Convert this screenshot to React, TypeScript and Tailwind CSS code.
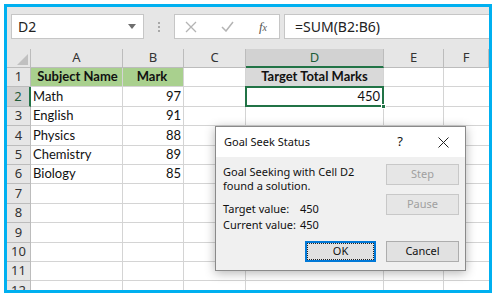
import React from "react";

const cols = ["A", "B", "C", "D", "E", "F"];

const rows: { n: number; a?: string; b?: string; d?: string }[] = [
  { n: 1, a: "Subject Name", b: "Mark", d: "Target Total Marks" },
  { n: 2, a: "Math", b: "97", d: "450" },
  { n: 3, a: "English", b: "91" },
  { n: 4, a: "Physics", b: "88" },
  { n: 5, a: "Chemistry", b: "89" },
  { n: 6, a: "Biology", b: "85" },
  { n: 7 },
  { n: 8 },
  { n: 9 },
  { n: 10 },
  { n: 11 },
  { n: 12 },
];

const cellFont = { fontFamily: "Lato, 'Liberation Sans', sans-serif" };
const uiFont = { fontFamily: "'Noto Sans', 'Liberation Sans', sans-serif" };

const FormulaBar = () => (
  <div className="h-[42px] shrink-0 bg-[#e6e6e6] flex items-start pt-[7px] pl-[4px]" style={uiFont}>
    <div className="w-[133px] h-[25px] bg-white border border-[#c6c6c6] flex items-center justify-between pl-[6px] pr-[7px] text-[14px] text-[#222]">
      <span>D2</span>
      <span className="w-0 h-0 border-l-[4px] border-r-[4px] border-t-[5px] border-l-transparent border-r-transparent border-t-[#6e6e6e]" />
    </div>
    <div className="w-[30px] h-[25px] flex flex-col items-center justify-center gap-[2px]">
      <span className="w-[2px] h-[2px] bg-[#a8a8a8]" />
      <span className="w-[2px] h-[2px] bg-[#a8a8a8]" />
      <span className="w-[2px] h-[2px] bg-[#a8a8a8]" />
    </div>
    <div className="w-[106px] h-[25px] bg-white border border-[#c6c6c6] flex items-center justify-between pl-[10px] pr-[12px]">
      <svg width="12" height="12" viewBox="0 0 12 12">
        <path d="M1 1 L11 11 M11 1 L1 11" stroke="#b4b4b4" strokeWidth="1.3" fill="none" />
      </svg>
      <svg width="13" height="11" viewBox="0 0 13 11">
        <path d="M1 6 L5 10 L12 1" stroke="#b4b4b4" strokeWidth="1.5" fill="none" />
      </svg>
      <span className="text-[13px] italic text-[#555]" style={{ fontFamily: "'Liberation Serif', serif" }}>
        f<span className="text-[10px]">x</span>
      </span>
    </div>
    <div className="flex-1 ml-[4px] h-[25px] bg-white border border-[#c6c6c6] border-r-0 flex items-center pl-[10px] text-[14px] text-[#222]">
      =SUM(B2:B6)
    </div>
  </div>
);

const Grid = () => (
  <div
    className="grid grid-cols-[24px_92px_61px_62px_138px_60px_1fr] auto-rows-[19.4px] text-[13px] text-[#111]"
    style={{ ...cellFont, gridTemplateRows: "19px" }}
  >
    <div className="bg-[#e6e6e6] border-r border-b border-[#bcbcbc] relative">
      <svg className="absolute right-[2px] bottom-[2px]" width="11" height="11" viewBox="0 0 11 11">
        <path d="M11 0 L11 11 L0 11 Z" fill="#c0c0c0" />
      </svg>
    </div>
    {cols.map((c) =>
      c === "D" ? (
        <div key={c} className="bg-[#d2d2d2] border-r border-[#bcbcbc] border-b-2 border-b-[#217346] flex items-center justify-center text-[#1e5c38]" style={uiFont}>
          {c}
        </div>
      ) : (
        <div key={c} className="bg-[#e6e6e6] border-r border-b border-[#bcbcbc] flex items-center justify-center text-[#333]" style={uiFont}>
          {c}
        </div>
      )
    )}
    {rows.map((r) => (
      <React.Fragment key={r.n}>
        {r.n === 2 ? (
          <div className="bg-[#d2d2d2] border-r-2 border-r-[#217346] border-b border-[#bcbcbc] flex items-center justify-center text-[#1e5c38]" style={uiFont}>
            {r.n}
          </div>
        ) : (
          <div className="bg-[#e6e6e6] border-r border-b border-[#bcbcbc] flex items-center justify-center text-[#333]" style={uiFont}>
            {r.n}
          </div>
        )}
        <div className={`border-r border-b border-[#d4d4d4] flex items-center pl-[2px] ${r.n === 1 ? "bg-[#a9d08e] font-bold justify-center" : ""}`}>
          {r.a}
        </div>
        <div className={`border-r border-b border-[#d4d4d4] flex items-center pr-[2px] ${r.n === 1 ? "bg-[#a9d08e] font-bold justify-center" : "justify-end"}`}>
          {r.b}
        </div>
        <div className="border-r border-b border-[#d4d4d4]" />
        {r.n === 2 ? (
          <div className="relative border-2 border-[#217346] -mt-[1px] -ml-[1px] flex items-center justify-end pr-[2px]">
            {r.d}
            <span className="absolute -right-[4px] -bottom-[4px] w-[5px] h-[5px] bg-[#217346] border border-white" />
          </div>
        ) : r.n === 1 ? (
          <div className="bg-[#d9d9d9] border-r border-b border-[#d4d4d4] flex items-center justify-center font-bold">
            {r.d}
          </div>
        ) : (
          <div className="border-r border-b border-[#d4d4d4]" />
        )}
        <div className="border-r border-b border-[#d4d4d4]" />
        <div className="border-b border-[#d4d4d4]" />
      </React.Fragment>
    ))}
  </div>
);

const DlgButton = ({ label, disabled, focused }: { label: string; disabled?: boolean; focused?: boolean }) => (
  <div
    className={`h-[21px] flex items-center justify-center text-[11px] bg-[#e1e1e1] border ${
      focused ? "border-[#0078d7] border-2" : "border-[#adadad]"
    } ${disabled ? "text-[#a0a0a0] border-[#c8c8c8] bg-[#e6e6e6]" : "text-[#111]"}`}
  >
    {focused ? (
      <div className="w-full h-full border border-dotted border-[#222] flex items-center justify-center">{label}</div>
    ) : (
      label
    )}
  </div>
);

const GoalSeekDialog = () => (
  <div
    className="absolute left-[208px] top-[119px] w-[251px] h-[145px] border border-[#8a8a8a] bg-[#f0f0f0] shadow-[0_2px_10px_rgba(0,0,0,0.3)] flex flex-col text-[#111]"
    style={uiFont}
  >
    <div className="h-[30px] bg-white flex items-center pl-[8px] text-[11px]">
      <span className="flex-1">Goal Seek Status</span>
      <span className="w-[20px] text-center text-[13px] mr-[28px]">?</span>
      <svg className="mr-[16px]" width="11" height="11" viewBox="0 0 11 11">
        <path d="M0.5 0.5 L10.5 10.5 M10.5 0.5 L0.5 10.5" stroke="#222" strokeWidth="1" fill="none" />
      </svg>
    </div>
    <div className="flex-1 flex flex-col pl-[7px] pr-[6px] pt-[7px]">
      <div className="flex">
        <div className="flex-1 text-[11px] leading-[14px] pt-[1px]">
          <div>Goal Seeking with Cell D2</div>
          <div>found a solution.</div>
          <div className="mt-[8px] leading-[16px]">
            <div className="flex">
              <span className="w-[77px]">Target value:</span>
              <span>450</span>
            </div>
            <div className="flex">
              <span className="w-[77px]">Current value:</span>
              <span>450</span>
            </div>
          </div>
        </div>
        <div className="w-[73px] flex flex-col gap-[9px]">
          <DlgButton label="Step" disabled />
          <DlgButton label="Pause" disabled />
        </div>
      </div>
      <div className="flex justify-end gap-[10px] mt-[8px]">
        <div className="w-[71px] h-[22px]">
          <DlgButton label="OK" focused />
        </div>
        <div className="w-[73px]">
          <DlgButton label="Cancel" />
        </div>
      </div>
    </div>
  </div>
);

export default function App() {
  return (
    <div className="w-[497px] h-[297px] bg-white pl-[4px] pt-[4px]">
      <div className="w-[488px] h-[289px] border-[3px] border-[#00b0f0] relative overflow-hidden flex flex-col bg-white">
        <FormulaBar />
        <Grid />
        <GoalSeekDialog />
      </div>
    </div>
  );
}
